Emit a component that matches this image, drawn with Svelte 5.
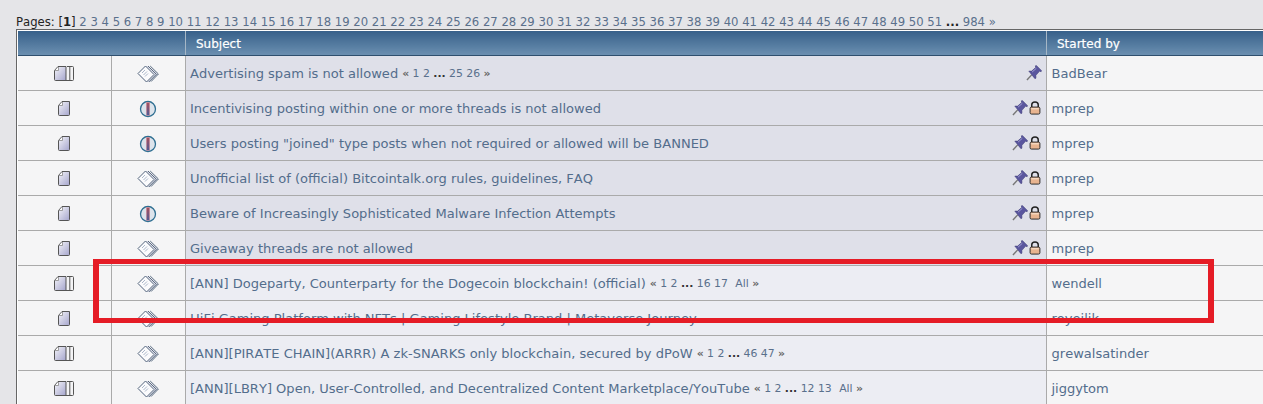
<script>
  const pages = [];
  for (let i = 2; i <= 51; i++) pages.push(i);

  const topics = [
    { hot: true, icon: 'sheet', title: 'Advertising spam is not allowed', pager: ['1', '2', '25', '26'], pin: true, by: 'BadBear', stuck: true },
    { icon: 'warn', title: 'Incentivising posting within one or more threads is not allowed', pin: true, lock: true, by: 'mprep', stuck: true },
    { icon: 'warn', title: 'Users posting "joined" type posts when not required or allowed will be BANNED', pin: true, lock: true, by: 'mprep', stuck: true },
    { icon: 'sheet', title: 'Unofficial list of (official) Bitcointalk.org rules, guidelines, FAQ', pin: true, lock: true, by: 'mprep', stuck: true },
    { icon: 'warn', title: 'Beware of Increasingly Sophisticated Malware Infection Attempts', pin: true, lock: true, by: 'mprep', stuck: true },
    { icon: 'sheet', title: 'Giveaway threads are not allowed', pin: true, lock: true, by: 'mprep', stuck: true },
    { hot: true, icon: 'sheet', title: '[ANN] Dogeparty, Counterparty for the Dogecoin blockchain! (official)', pager: ['1', '2', '16', '17'], all: true, by: 'wendell' },
    { icon: 'sheet', title: 'HiFi Gaming Platform with NFTs | Gaming Lifestyle Brand | Metaverse Journey', by: 'royeilik' },
    { hot: true, icon: 'sheet', title: '[ANN][PIRATE CHAIN](ARRR) A zk-SNARKS only blockchain, secured by dPoW', pager: ['1', '2', '46', '47'], by: 'grewalsatinder' },
    { hot: true, icon: 'sheet', title: '[ANN][LBRY] Open, User-Controlled, and Decentralized Content Marketplace/YouTube', pager: ['1', '2', '12', '13'], all: true, by: 'jiggytom' }
  ];
</script>

<div class="page">
  <div class="pages">
    Pages: [<b>1</b>]
    {#each pages as p}<span class="pl">{p}</span>{' '}{/each}<b>...</b>
    <span class="pl">984</span> <span class="pl">»</span>
  </div>

  <div class="frame">
    <table>
      <colgroup>
        <col class="c1" />
        <col class="c2" />
        <col class="c3" />
        <col class="c4" />
      </colgroup>
      <thead>
        <tr>
          <th colspan="2"></th>
          <th>Subject</th>
          <th>Started by</th>
        </tr>
      </thead>
      <tbody>
        {#each topics as t}
          <tr class:stuck={t.stuck}>
            <td class="ic">
              <svg width="20" height="15" viewBox="0 0 20 15">
                <defs>
                  <linearGradient id="paper" x1="0" y1="0" x2="1" y2="1">
                    <stop offset="0" stop-color="#f6f6fa" />
                    <stop offset="1" stop-color="#a4a4cc" />
                  </linearGradient>
                  <linearGradient id="bar" x1="0" y1="0" x2="0" y2="1">
                    <stop offset="0" stop-color="#a8505e" />
                    <stop offset="1" stop-color="#4c5c96" />
                  </linearGradient>
                </defs>
                {#if t.hot}
                  <path d="M13 0.5 H18.5 Q19.5 0.5 19.5 1.5 V13.5 Q19.5 14.5 18.5 14.5 H12 M15.8 0.5 V14.5" fill="#f4f4f6" stroke="#555" />
                  <path d="M0.5 4.5 L4 0.5 H12 V14.5 H1.5 Q0.5 14.5 0.5 13.5 Z" fill="url(#paper)" stroke="#555" />
                  <path d="M1 4.5 H4.5 V1" fill="#fff" stroke="#888" stroke-width="0.8" />
                {:else}
                  <path d="M4.5 4.5 L8 0.5 H15.5 V13.5 Q15.5 14.5 14.5 14.5 H5.5 Q4.5 14.5 4.5 13.5 Z" fill="url(#paper)" stroke="#555" />
                  <path d="M5 4.5 H8.5 V1" fill="#fff" stroke="#888" stroke-width="0.8" />
                {/if}
              </svg>
            </td>
            <td class="ic">
              {#if t.icon === 'warn'}
                <svg width="18" height="18" viewBox="0 0 18 18">
                  <circle cx="9" cy="9" r="7.5" fill="#dde4ec" stroke="#2f6f92" stroke-width="1.3" />
                  <rect x="7.4" y="2.6" width="3.2" height="12.8" fill="url(#bar)" stroke="#d58a96" stroke-width="0.5" />
                </svg>
              {:else}
                <svg width="22" height="18" viewBox="0 0 22 18">
                  <path d="M11 1 L21 9 L12 17 L9 17 L1 9 L8 1 Z" fill="#dcdce8" />
                  <path d="M1 8.5 L8.5 1 L17 9.5 L9.5 17 Z" fill="#fbfbfd" stroke="#56687e" />
                  <path d="M11 1 L19.4 9.3 L11.8 17 M13.2 1 L21.4 9 L14 16.6" fill="none" stroke="#56687e" />
                  <path d="M5 8 L8 5 M6.5 10 L10 6.5 M8 11.5 L11 8.5" stroke="#aab6c8" />
                </svg>
              {/if}
            </td>
            <td class="subj">
              <div class="subj-row">
                <span class="ttl">{t.title}</span>
                {#if t.pager}
                  <small>
                    <span class="q">«</span>
                    {t.pager[0]} {t.pager[1]} <b>...</b> {t.pager[2]} {t.pager[3]}
                    {#if t.all}<span class="all">All</span>{/if}
                    <span class="q">»</span>
                  </small>
                {/if}
                <span class="marks">
                  {#if t.pin}
                    <svg width="16" height="16" viewBox="0 0 17 17">
                      <path d="M1 16 L6 10.5" stroke="#777" stroke-width="1.5" />
                      <path d="M3 6.5 L6 6.5 L10.5 2.5 L9.8 1 L11 0.5 L16.5 6 L16 7.2 L14.5 6.5 L10.5 11 L10.5 14 L9.5 14.5 Z" fill="#5a569e" stroke="#3c3a78" stroke-width="0.6" />
                      <path d="M6.5 7.5 L11 3.5" stroke="#a5a2d8" />
                    </svg>
                  {/if}
                  {#if t.lock}
                    <svg class="lock" width="12" height="14" viewBox="0 0 13 15">
                      <path d="M3 7 V4 Q3 1 6.5 1 Q10 1 10 4 V7" fill="none" stroke="#222" stroke-width="1.6" />
                      <rect x="1.2" y="6.5" width="10.6" height="7.6" rx="1.5" fill="#e8b490" stroke="#222" />
                      <rect x="2.5" y="7.6" width="8" height="1.4" fill="#f8dcc4" />
                    </svg>
                  {/if}
                </span>
              </div>
            </td>
            <td class="by">{t.by}</td>
          </tr>
        {/each}
      </tbody>
    </table>
  </div>

  <div class="callout"></div>
</div>

<style>
  :global(body) {
    margin: 0;
    background: #e5e5e8;
  }

  .page {
    position: relative;
    width: 1263px;
    height: 404px;
    overflow: hidden;
    padding: 15px 0 0 16px;
    box-sizing: border-box;
    font-family: "DejaVu Sans", Verdana, sans-serif;
    font-kerning: none;
    color: #4a6484;
  }

  .pages {
    font-size: 11.65px;
    line-height: 14px;
    color: #222;
    white-space: nowrap;
  }

  .pl {
    color: #5a708c;
  }

  .frame {
    width: 1290px;
    border: 1px solid #666;
    border-right: 0;
    padding: 1px 0 0 1px;
    background: #fff;
    box-sizing: border-box;
  }

  table {
    table-layout: fixed;
    width: 100%;
    border-collapse: collapse;
  }

  .c1 { width: 93px; }
  .c2 { width: 74px; }
  .c3 { width: 861px; }

  th {
    height: 23px;
    padding: 1px 0 0 10.5px;
    background: linear-gradient(#37608a, #6b8fb0);
    border-left: 1px solid #a6b7c6;
    border-bottom: 1px solid #2f4f6e;
    color: #fff;
    font-size: 12px;
    font-weight: normal;
    text-align: left;
    -webkit-text-stroke: 0.2px #fff;
  }

  th:first-child {
    border-left: 0;
  }

  td {
    height: 34px;
    padding: 0;
    background: #f5f5f6;
    border-left: 1px solid #aaa;
    border-bottom: 1px solid #aaa;
    font-size: 13.04px;
    box-sizing: content-box;
  }

  td:first-child {
    border-left: 0;
  }

  .ic {
    text-align: center;
  }

  .ic svg {
    display: block;
    margin: 1px auto 0;
  }

  .subj {
    padding: 0 4px 0 4.5px;
    background: #ecedf3;
  }

  .stuck .subj {
    background: #dfe0e9;
  }

  .subj-row {
    display: flex;
    align-items: center;
    white-space: nowrap;
  }

  .ttl {
    color: #536d8c;
  }

  small {
    margin-left: 4px;
    font-size: 10.85px;
    color: #5a708c;
  }

  small b {
    color: #333;
  }

  .q {
    color: #666;
    font-weight: bold;
  }

  .all {
    margin-left: 4px;
  }

  .marks {
    margin-left: auto;
    display: flex;
    align-items: center;
    gap: 1px;
  }

  .lock {
    margin-right: 1px;
  }

  .by {
    padding-left: 5px;
    color: #536d8c;
  }

  .callout {
    position: absolute;
    left: 93px;
    top: 259px;
    width: 1121px;
    height: 64px;
    box-sizing: border-box;
    border-style: solid;
    border-color: #e51c26;
    border-width: 5px 6px;
  }
</style>
